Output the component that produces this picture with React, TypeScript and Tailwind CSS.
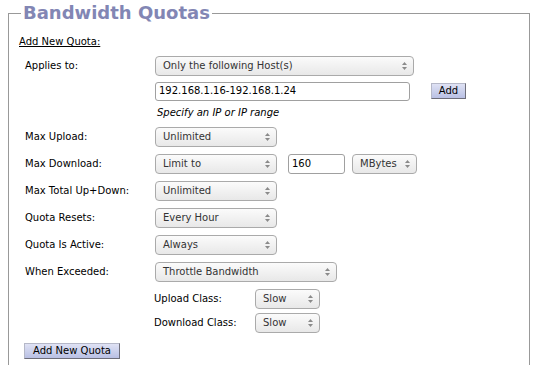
import React from "react";

function Arrows() {
  return (
    <svg width="7" height="10" viewBox="0 0 7 10" className="shrink-0">
      <path d="M1 4 L3.5 1 L6 4 Z" fill="#8a8a8a" />
      <path d="M1 6 L3.5 9 L6 6 Z" fill="#8a8a8a" />
    </svg>
  );
}

function Sel({ w, text }: { w: string; text: string }) {
  return (
    <div
      className={`${w} flex h-[20px] items-center justify-between rounded-[4px] border border-[#aaaaaa] bg-gradient-to-b from-[#fbfbfb] to-[#e8e8e8] pl-[7px] pr-[5px] text-[10px] text-[#333]`}
    >
      <span className="leading-none">{text}</span>
      <Arrows />
    </div>
  );
}

function Btn({ text, w }: { text: string; w: string }) {
  return (
    <div
      className={`${w} flex h-[16px] items-center justify-center border border-[#b5b8c8] border-r-[#6e6e7a] border-b-[#6e6e7a] bg-gradient-to-b from-[#dfe2f4] to-[#b9c0e4] text-[10px] leading-none text-black`}
    >
      {text}
    </div>
  );
}

function Row({ label, mt, children }: { label: string; mt: string; children: React.ReactNode }) {
  return (
    <div className={`${mt} flex h-[20px] items-center pl-[6px]`}>
      <div className="w-[130px] shrink-0 text-[10px] leading-none text-black">{label}</div>
      {children}
    </div>
  );
}

export default function App() {
  return (
    <div className="h-[365px] w-[540px] overflow-hidden bg-white font-['DejaVu_Sans',sans-serif]">
      <fieldset className="mx-[8px] mt-[2px] w-[522px] border border-[#999999] pb-[40px]">
        <legend className="ml-[12px] px-[2px] text-[18px] font-bold leading-[22px] text-[#8286b4]">
          Bandwidth Quotas
        </legend>
        <div className="pl-[10px] pt-[11px]">
          <div className="flex h-[14px] items-center text-[10px] leading-none text-black underline">
            Add New Quota:
          </div>
          <Row label="Applies to:" mt="mt-[7px]">
            <Sel w="w-[259px]" text="Only the following Host(s)" />
          </Row>
          <div className="mt-[5px] flex h-[20px] items-center pl-[136px]">
            <div className="flex h-[19px] w-[255px] items-center rounded-[3px] border border-[#a0a0a0] bg-white pl-[3px] text-[10px] leading-none text-black">
              192.168.1.16-192.168.1.24
            </div>
            <div className="ml-[21px]">
              <Btn text="Add" w="w-[35px]" />
            </div>
          </div>
          <div className="mt-[1px] flex h-[22px] items-center pl-[138px] text-[10px] italic leading-none text-black">
            Specify an IP or IP range
          </div>
          <Row label="Max Upload:" mt="mt-[3px]">
            <Sel w="w-[122px]" text="Unlimited" />
          </Row>
          <Row label="Max Download:" mt="mt-[7px]">
            <Sel w="w-[122px]" text="Limit to" />
            <div className="ml-[11px] flex h-[20px] w-[57px] items-center rounded-[3px] border border-[#a0a0a0] bg-white pl-[3px] text-[10px] leading-none text-black">
              160
            </div>
            <div className="ml-[7px]">
              <Sel w="w-[65px]" text="MBytes" />
            </div>
          </Row>
          <Row label="Max Total Up+Down:" mt="mt-[7px]">
            <Sel w="w-[122px]" text="Unlimited" />
          </Row>
          <Row label="Quota Resets:" mt="mt-[7px]">
            <Sel w="w-[122px]" text="Every Hour" />
          </Row>
          <Row label="Quota Is Active:" mt="mt-[7px]">
            <Sel w="w-[122px]" text="Always" />
          </Row>
          <Row label="When Exceeded:" mt="mt-[7px]">
            <Sel w="w-[182px]" text="Throttle Bandwidth" />
          </Row>
          <div className="mt-[7px] flex h-[20px] items-center pl-[135px]">
            <div className="w-[101px] text-[10px] leading-none text-black">Upload Class:</div>
            <Sel w="w-[65px]" text="Slow" />
          </div>
          <div className="mt-[4px] flex h-[20px] items-center pl-[135px]">
            <div className="w-[101px] text-[10px] leading-none text-black">Download Class:</div>
            <Sel w="w-[65px]" text="Slow" />
          </div>
          <div className="mt-[10px] pl-[5px]">
            <Btn text="Add New Quota" w="w-[96px]" />
          </div>
        </div>
      </fieldset>
    </div>
  );
}
